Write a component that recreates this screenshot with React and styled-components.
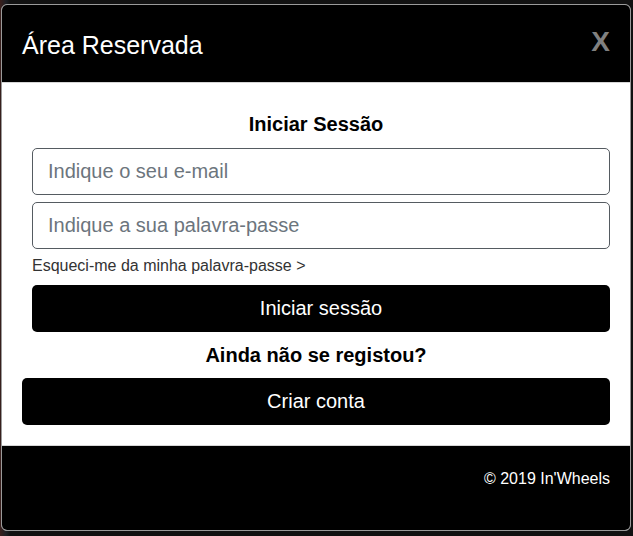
import React from "react";
import styled, { createGlobalStyle } from "styled-components";

const GlobalStyle = createGlobalStyle`
  html, body {
    margin: 0;
    padding: 0;
    background: #1b1a1c;
    font-family: "Liberation Sans", Arial, sans-serif;
  }
  * { box-sizing: border-box; }
`;

const Backdrop = styled.div`
  width: 633px;
  height: 536px;
  padding: 4px 2px 0 1px;
  background: linear-gradient(90deg, #3a1f1c 0, #1d1f24 6px, #111 10px);
`;

const Modal = styled.div`
  width: 630px;
  height: 527px;
  border: 1px solid #9a9a9a;
  border-radius: 6px;
  overflow: hidden;
  display: flex;
  flex-direction: column;
  background: #fff;
`;

const Header = styled.div`
  height: 78px;
  background: #000;
  border-bottom: 1px solid #d6d6d6;
  display: flex;
  align-items: center;
  justify-content: space-between;
  padding: 0 20px 0 20px;
`;

const Title = styled.h4`
  margin: 3px 0 0 0;
  color: #fff;
  font-size: 25px;
  font-weight: 400;
`;

const Close = styled.button`
  background: none;
  border: 0;
  padding: 0;
  margin: 0 0 4px 0;
  color: #808080;
  font-family: "Liberation Sans", Arial, sans-serif;
  font-size: 28px;
  font-weight: 700;
  cursor: pointer;
`;

const Body = styled.div`
  flex: 1;
  padding: 29px 20px 0 20px;
  display: flex;
  flex-direction: column;
`;

const Form = styled.form`
  margin-left: 10px;
  display: flex;
  flex-direction: column;
`;

const Heading = styled.h5`
  margin: ${(p) => p.$margin || "0"};
  text-align: center;
  font-size: 20px;
  line-height: 24px;
  font-weight: 700;
  color: #000;
`;

const Input = styled.input`
  width: 100%;
  height: 47px;
  margin-top: ${(p) => p.$top || "0"};
  border: 1px solid #555b61;
  border-radius: 5px;
  padding: 0 15px;
  font-family: "Liberation Sans", Arial, sans-serif;
  font-size: 20px;
  color: #333;
  &::placeholder { color: #6c757d; }
  &:focus { outline: none; }
`;

const Forgot = styled.a`
  margin-top: 8px;
  font-size: 16px;
  line-height: 18px;
  color: #333;
  text-decoration: none;
`;

const Button = styled.button`
  width: 100%;
  height: 47px;
  margin-top: ${(p) => p.$top || "0"};
  background: #000;
  color: #fff;
  border: 0;
  border-radius: 5px;
  font-family: "Liberation Sans", Arial, sans-serif;
  font-size: 20px;
  cursor: pointer;
`;

const Footer = styled.div`
  height: 85px;
  background: #000;
  border-top: 1px solid #d6d6d6;
  display: flex;
  align-items: center;
  justify-content: flex-end;
  padding: 0 20px 18px 20px;
  color: #fff;
  font-size: 16px;
`;

export default function App() {
  return (
    <>
      <GlobalStyle />
      <Backdrop>
        <Modal>
          <Header>
            <Title>Área Reservada</Title>
            <Close>X</Close>
          </Header>
          <Body>
            <Heading>Iniciar Sessão</Heading>
            <Form onSubmit={(e) => e.preventDefault()}>
              <Input $top="12px" type="email" placeholder="Indique o seu e-mail" />
              <Input $top="7px" type="password" placeholder="Indique a sua palavra-passe" />
              <Forgot href="#">Esqueci-me da minha palavra-passe &gt;</Forgot>
              <Button $top="10px">Iniciar sessão</Button>
            </Form>
            <Heading $margin="11px 0 0 0">Ainda não se registou?</Heading>
            <Button $top="11px">Criar conta</Button>
          </Body>
          <Footer>© 2019 In'Wheels</Footer>
        </Modal>
      </Backdrop>
    </>
  );
}
